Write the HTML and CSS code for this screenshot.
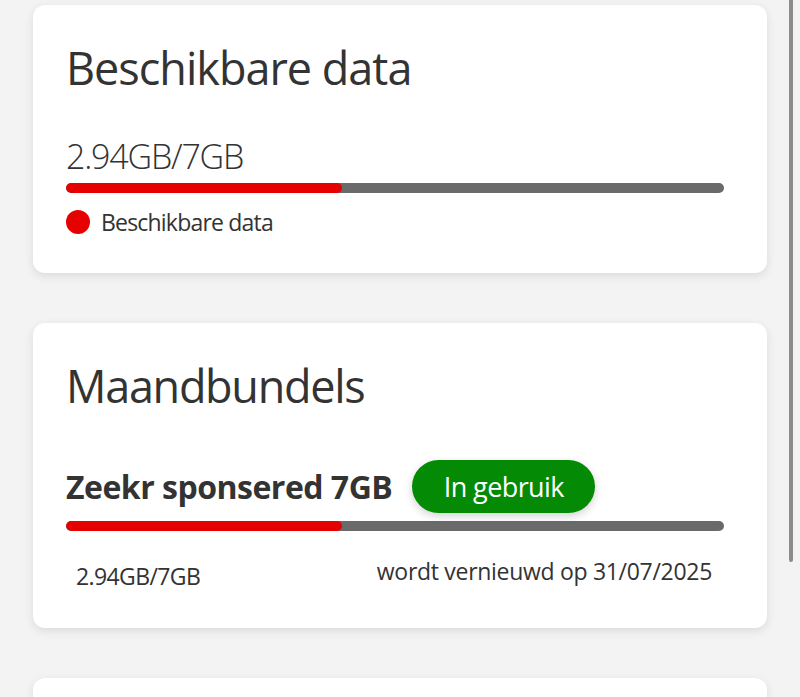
FILE: index.html
```html
<!DOCTYPE html>
<html lang="nl">
<head>
<meta charset="utf-8">
<title>Data</title>
<link rel="stylesheet" href="styles.css">
</head>
<body>
<div class="page">
  <section class="card">
    <h2 class="card-title">Beschikbare data</h2>
    <div class="usage">2.94GB/7GB</div>
    <div class="bar"><div class="bar-fill" style="width:42%"></div></div>
    <div class="legend">
      <span class="dot"></span>
      <span class="legend-text">Beschikbare data</span>
    </div>
  </section>

  <section class="card card-bundles">
    <h2 class="card-title title-bundles">Maandbundels</h2>
    <div class="bundle-head">
      <span class="bundle-name">Zeekr sponsered 7GB</span>
      <span class="badge">In gebruik</span>
    </div>
    <div class="bar bar-bundle"><div class="bar-fill" style="width:42%"></div></div>
    <div class="bundle-foot">
      <span class="foot-left">2.94GB/7GB</span>
      <span class="foot-right">wordt vernieuwd op 31/07/2025</span>
    </div>
  </section>

  <section class="card card-next"></section>
</div>
<div class="scroll-thumb"></div>
</body>
</html>
```
FILE: styles.css
```css
html, body {
  margin: 0;
  padding: 0;
  background: #f3f3f3;
  height: 697px;
  overflow: hidden;
}
body {
  font-family: "Open Sans", "DejaVu Sans", sans-serif;
  color: #333333;
}
.page {
  display: flex;
  flex-direction: column;
  gap: 50px;
  padding: 5px 33px 0 33px;
}
.card {
  background: #ffffff;
  border-radius: 12px;
  box-shadow: 0 3px 10px rgba(0, 0, 0, 0.10);
  padding: 35px 43px 39px 33px;
}
.card-title {
  margin: 0;
  font-size: 45px;
  line-height: 56px;
  font-weight: 400;
  letter-spacing: -1px;
}
.title-bundles {
  letter-spacing: -1.3px;
}
.usage {
  margin-top: 38px;
  font-size: 34px;
  line-height: 44px;
  font-weight: 300;
  letter-spacing: -1.2px;
}
.bar {
  margin-top: 5px;
  height: 10px;
  border-radius: 5px;
  background: #6a6a6a;
  overflow: hidden;
}
.bar-fill {
  height: 100%;
  background: #e60000;
  border-radius: 5px;
}
.legend {
  display: flex;
  align-items: center;
  gap: 11px;
  margin-top: 17px;
}
.dot {
  width: 24px;
  height: 24px;
  border-radius: 50%;
  background: #e60000;
  flex: none;
}
.legend-text {
  font-size: 23px;
  line-height: 24px;
  letter-spacing: -0.8px;
}
.bundle-head {
  display: flex;
  align-items: center;
  gap: 20px;
  margin-top: 46px;
}
.bundle-name {
  font-size: 32px;
  font-weight: 700;
  line-height: 40px;
  letter-spacing: -0.5px;
}
.badge {
  display: flex;
  align-items: center;
  justify-content: center;
  width: 183px;
  height: 53px;
  border-radius: 27px;
  background: #048a04;
  color: #ffffff;
  font-size: 27px;
  letter-spacing: -0.6px;
  box-shadow: 0 3px 8px rgba(0, 0, 0, 0.18);
}
.bar-bundle {
  margin-top: 8px;
}
.bundle-foot {
  display: flex;
  justify-content: space-between;
  align-items: flex-end;
  margin-top: 26px;
  padding: 0 12px 0 10px;
}
.card-bundles {
  padding-bottom: 38px;
}
.foot-left {
  font-size: 23px;
  line-height: 28px;
  letter-spacing: -0.6px;
}
.foot-right {
  font-size: 23px;
  line-height: 28px;
  padding-bottom: 5px;
  letter-spacing: -0.3px;
}
.card-next {
  height: 19px;
  padding: 0;
  border-radius: 12px 12px 0 0;
}
.scroll-thumb {
  position: absolute;
  top: 0;
  left: 789px;
  width: 4px;
  height: 562px;
  background: #8c8c8c;
  border-radius: 0 0 2px 2px;
}
```
